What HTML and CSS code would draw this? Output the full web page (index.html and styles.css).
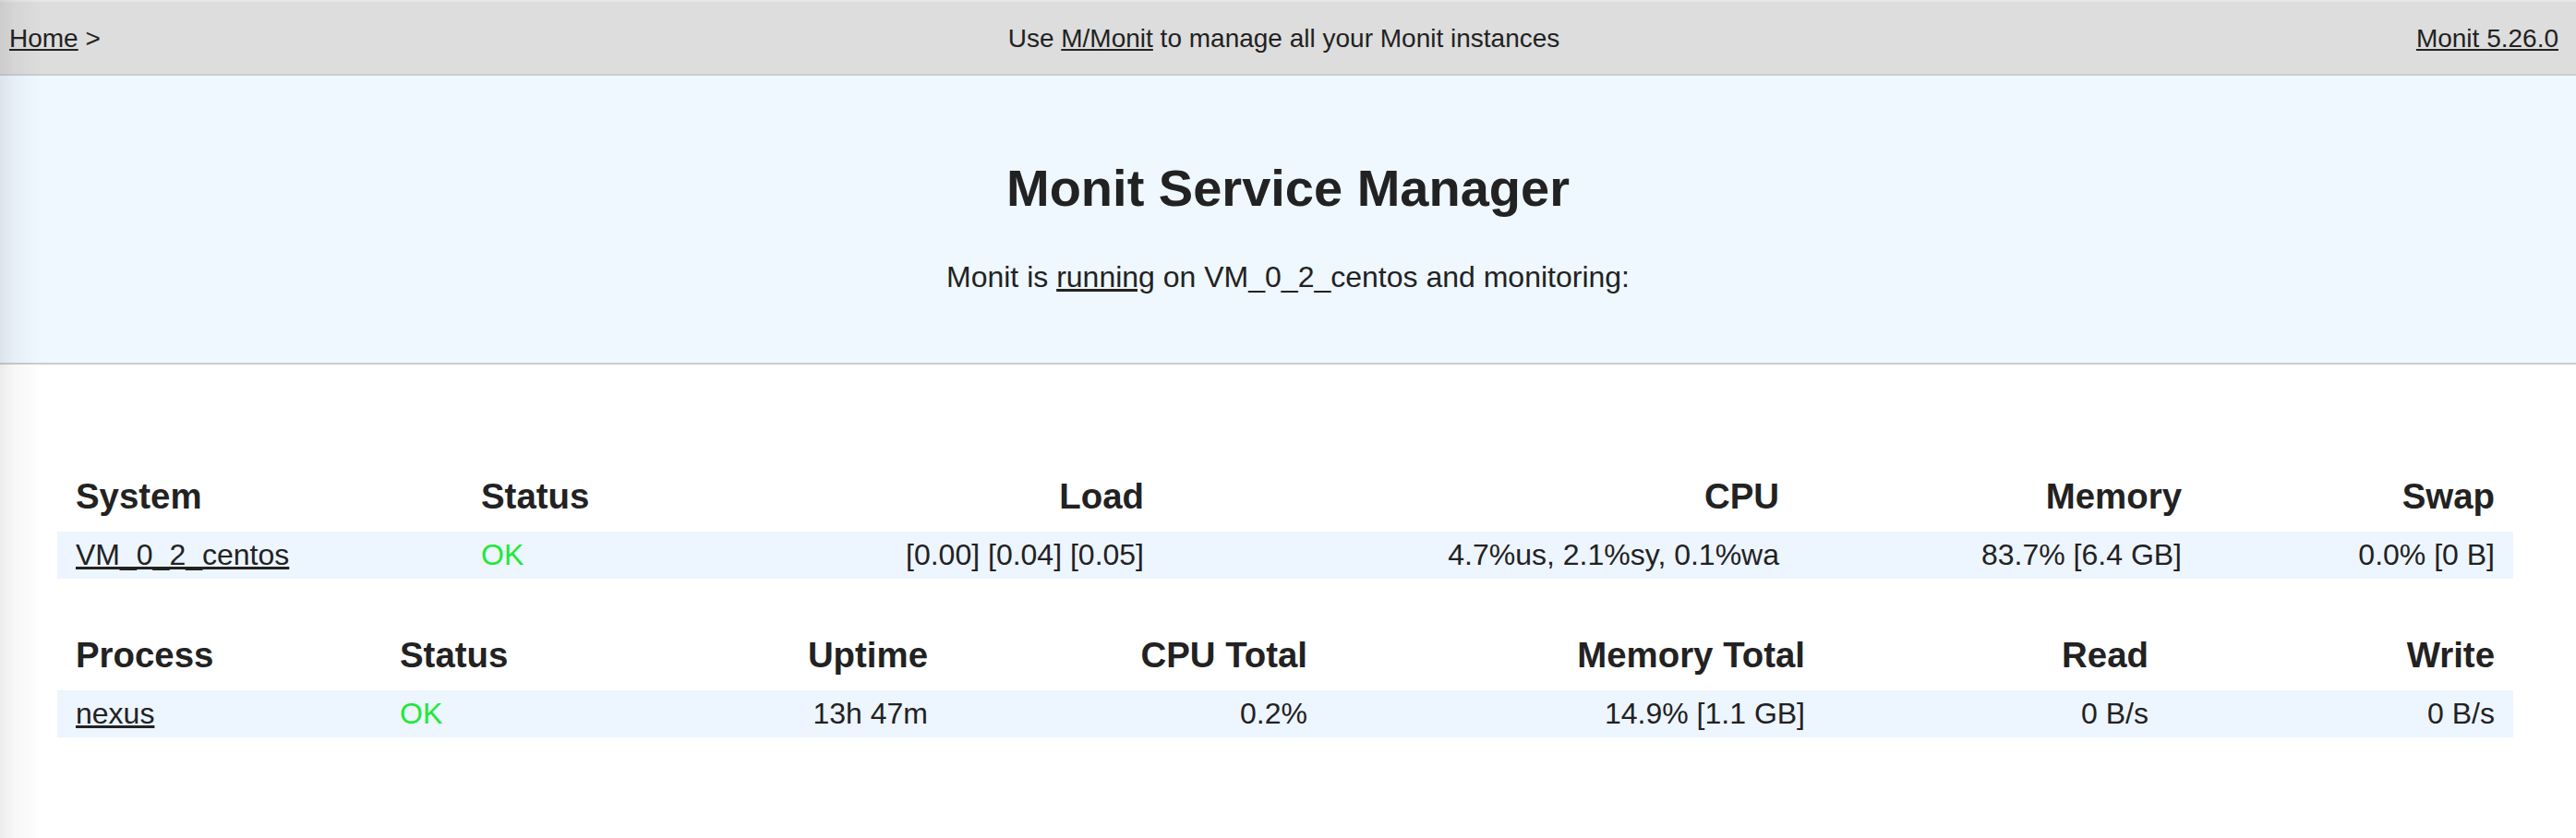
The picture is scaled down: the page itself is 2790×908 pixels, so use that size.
FILE: index.html
```html
<!DOCTYPE html>
<html lang="en">
<head>
<meta charset="utf-8">
<title>Monit: VM_0_2_centos</title>
<link rel="stylesheet" href="styles.css">
</head>
<body>
<div class="nav">
  <div class="nav-left"><a href="#">Home</a> &gt;</div>
  <div class="nav-center">Use <a href="#">M/Monit</a> to manage all your Monit instances</div>
  <div class="nav-right"><a href="#">Monit 5.26.0</a></div>
</div>
<div class="header">
  <h1 class="title">Monit Service Manager</h1>
  <p class="subtitle">Monit is <a href="#">running</a> on VM_0_2_centos and monitoring:</p>
</div>
<div class="content">
  <table class="status-table system-table">
    <colgroup>
      <col class="c1"><col class="c2"><col class="c3"><col class="c4"><col class="c5"><col class="c6">
    </colgroup>
    <thead>
      <tr>
        <th class="left">System</th>
        <th class="left">Status</th>
        <th class="right">Load</th>
        <th class="right">CPU</th>
        <th class="right">Memory</th>
        <th class="right">Swap</th>
      </tr>
    </thead>
    <tbody>
      <tr class="stripe">
        <td class="left"><a href="#">VM_0_2_centos</a></td>
        <td class="left ok">OK</td>
        <td class="right">[0.00]&nbsp;[0.04]&nbsp;[0.05]</td>
        <td class="right">4.7%us,&nbsp;2.1%sy,&nbsp;0.1%wa</td>
        <td class="right">83.7% [6.4&nbsp;GB]</td>
        <td class="right">0.0% [0&nbsp;B]</td>
      </tr>
    </tbody>
  </table>
  <table class="status-table process-table">
    <colgroup>
      <col class="c1"><col class="c2"><col class="c3"><col class="c4"><col class="c5"><col class="c6"><col class="c7">
    </colgroup>
    <thead>
      <tr>
        <th class="left">Process</th>
        <th class="left">Status</th>
        <th class="right">Uptime</th>
        <th class="right">CPU Total</th>
        <th class="right">Memory Total</th>
        <th class="right">Read</th>
        <th class="right">Write</th>
      </tr>
    </thead>
    <tbody>
      <tr class="stripe">
        <td class="left"><a href="#">nexus</a></td>
        <td class="left ok">OK</td>
        <td class="right">13h 47m</td>
        <td class="right">0.2%</td>
        <td class="right">14.9% [1.1&nbsp;GB]</td>
        <td class="right">0 B/s</td>
        <td class="right">0 B/s</td>
      </tr>
    </tbody>
  </table>
</div>
</body>
</html>
```
FILE: styles.css
```css
html, body {
  margin: 0;
  padding: 0;
  background: #ffffff;
}

body {
  font-family: "Liberation Sans", Arial, Helvetica, sans-serif;
  color: #222222;
}

/* soft shadow along the left window edge */
body::before {
  content: "";
  position: fixed;
  left: 0;
  top: 0;
  bottom: 0;
  width: 46px;
  background: linear-gradient(to right, rgba(0, 0, 0, 0.075), rgba(0, 0, 0, 0.03) 35%, rgba(0, 0, 0, 0));
  pointer-events: none;
}

a {
  color: #222222;
  text-decoration: underline;
}

/* ---------- top navigation ---------- */
.nav {
  display: grid;
  grid-template-columns: 1fr auto 1fr;
  align-items: start;
  height: 76px;
  padding: 2px 19px 0 10px;
  border-top: 2px solid #e7e7e7;
  border-bottom: 2px solid #cccccc;
  background: #dddddd;
  font-size: 28px;
  line-height: 76px;
  white-space: nowrap;
}

.nav-left {
  justify-self: start;
}

.nav-center {
  justify-self: center;
}

.nav-right {
  justify-self: end;
}

/* ---------- header ---------- */
.header {
  padding: 88px 0 73px;
  background: #eff7ff;
  border-bottom: 2px solid #cccccc;
  text-align: center;
}

.title {
  margin: 0;
  font-size: 56px;
  line-height: 1.2;
  font-weight: bold;
  color: #222222;
}

.subtitle {
  margin: 44px 0 0;
  font-size: 32px;
  line-height: 1.2;
}

/* ---------- tables ---------- */
.content {
  padding: 114px 0 0 62px;
}

.status-table {
  width: 2660px;
  table-layout: fixed;
  border-collapse: collapse;
  border-spacing: 0;
}

.process-table {
  margin-top: 54px;
}

.status-table th {
  padding: 6px 20px 15px;
  font-size: 38.4px;
  line-height: 46px;
  font-weight: bold;
  white-space: nowrap;
}

.status-table td {
  padding: 6.5px 20px;
  font-size: 32px;
  line-height: 38px;
  white-space: nowrap;
}

.status-table .left {
  text-align: left;
}

.status-table .right {
  text-align: right;
}

.stripe {
  background: #edf5ff;
}

.ok {
  color: #1fe83a;
}

/* column widths: system table */
.system-table .c1 { width: 439px; }
.system-table .c2 { width: 379px; }
.system-table .c3 { width: 379px; }
.system-table .c4 { width: 688px; }
.system-table .c5 { width: 436px; }
.system-table .c6 { width: 339px; }

/* column widths: process table */
.process-table .c1 { width: 351px; }
.process-table .c2 { width: 306px; }
.process-table .c3 { width: 306px; }
.process-table .c4 { width: 411px; }
.process-table .c5 { width: 539px; }
.process-table .c6 { width: 372px; }
.process-table .c7 { width: 375px; }
```
